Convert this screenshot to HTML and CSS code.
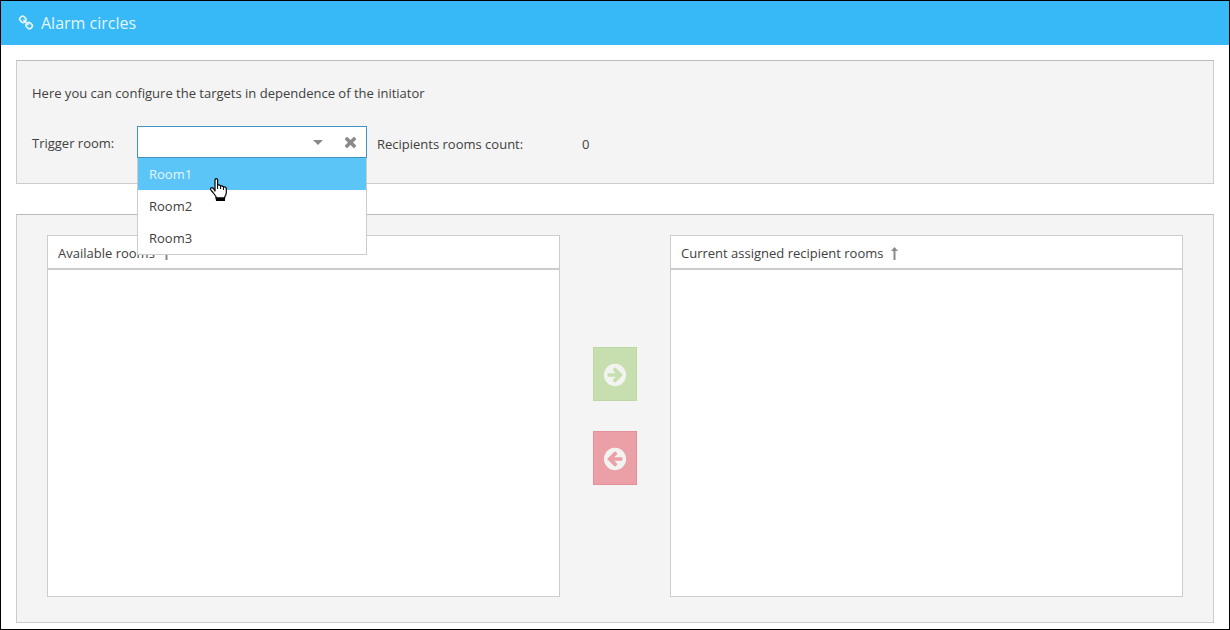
FILE: index.html
```html
<!DOCTYPE html>
<html lang="en">
<head>
<meta charset="utf-8">
<title>Alarm circles</title>
<link rel="stylesheet" href="styles.css">
</head>
<body>
<div class="window">
  <header class="titlebar">
    <svg class="titlebar-icon" viewBox="0 0 1792 1792" aria-hidden="true"><path d="M1520 1216q0-40-28-68l-208-208q-28-28-68-28-42 0-72 32 3 3 19 18.500t21.500 21.500 15 19 13 25.500 3.500 27.500q0 40-28 68t-68 28q-15 0-27.500-3.500t-25.500-13-19-15-21.500-21.500-18.500-19q-33 31-33 73 0 40 28 68l206 207q27 27 68 27 40 0 68-26l147-146q28-28 28-67zm-703-705q0-40-28-68l-206-207q-28-28-68-28-39 0-68 27l-147 146q-28 28-28 67 0 40 28 68l208 208q27 27 68 27 42 0 72-31-3-3-19-18.500t-21.500-21.500-15-19-13-25.500-3.500-27.500q0-40 28-68t68-28q15 0 27.500 3.500t25.500 13 19 15 21.500 21.500 18.500 19q33-31 33-73zm895 705q0 120-85 203l-147 146q-83 83-203 83-121 0-204-85l-206-207q-83-83-83-203 0-123 88-209l-88-88q-86 88-208 88-120 0-204-84l-208-208q-84-84-84-204t85-203l147-146q83-83 203-83 121 0 204 85l206 207q83 83 83 203 0 123-88 209l88 88q86-88 208-88 120 0 204 84l208 208q84 84 84 204z"/></svg>
    <h1 class="titlebar-text">Alarm circles</h1>
  </header>
  <main class="content">
    <section class="panel panel-settings">
      <p class="intro">Here you can configure the targets in dependence of the initiator</p>
      <div class="form-row">
        <label class="field-label" for="trigger-room">Trigger room:</label>
        <div class="combo">
          <div class="combo-box">
            <input class="combo-input" id="trigger-room" type="text" role="combobox" aria-expanded="true" aria-controls="room-list" autocomplete="off">
            <button class="combo-button" type="button" aria-label="Open list">
              <svg class="caret-icon" viewBox="0 0 10 5" aria-hidden="true"><path d="M0 0h10L5 5z"/></svg>
            </button>
            <button class="combo-button" type="button" aria-label="Clear">
              <svg class="clear-icon" viewBox="0 64 1792 1792" aria-hidden="true"><path d="M1490 1322q0 40-28 68l-136 136q-28 28-68 28t-68-28l-294-294-294 294q-28 28-68 28t-68-28l-136-136q-28-28-28-68t28-68l294-294-294-294q-28-28-28-68t28-68l136-136q28-28 68-28t68 28l294 294 294-294q28-28 68-28t68 28l136 136q28 28 28 68t-28 68l-294 294 294 294q28 28 28 68z"/></svg>
            </button>
          </div>
          <ul class="combo-list" id="room-list" role="listbox" aria-label="Rooms">
            <li class="combo-option is-active" role="option" aria-selected="true">Room1
              <svg class="pointer" viewBox="0 0 17 23" aria-hidden="true">
                <path fill="#fff" stroke="#000" stroke-width="1.200" stroke-linejoin="round" d="M5 13V2q0-1.400 1.300-1.400T7.600 2v5q2.600-.5 3 1 2.400-.5 2.800 1 2.900-.3 2.900 1.800v4q0 2-1.600 4V20H6v-1.500Q4.500 16.500 3 14.500L.8 11.800q-.7-1.500.6-2.100 1-.3 2 .8z"/>
                <path fill="none" stroke="#000" d="M7.600 7v4M10.600 8v3M13.400 9v3"/>
                <path d="M5.500 19.500h9.500V23h-9z"/>
              </svg>
            </li>
            <li class="combo-option" role="option" aria-selected="false">Room2</li>
            <li class="combo-option" role="option" aria-selected="false">Room3</li>
          </ul>
        </div>
        <span class="count-label">Recipients rooms count:</span>
        <output class="count-value">0</output>
      </div>
    </section>
    <section class="panel panel-rooms">
      <div class="room-list">
        <h2 class="room-list-head">Available rooms <svg class="sort-icon" viewBox="0 0 7 13" aria-hidden="true"><path d="M3.500 0L7 4H4.500v9h-2V4H0z"/></svg></h2>
      </div>
      <div class="transfer">
        <button class="transfer-button transfer-add" type="button" aria-label="Assign room" disabled>
          <svg class="transfer-icon" viewBox="0 0 1792 1792" aria-hidden="true"><path d="M1413 896q0-27-18-45l-91-91-362-362q-18-18-45-18t-45 18l-91 91q-18 18-18 45t18 45l189 189h-502q-26 0-45 19t-19 45v128q0 26 19 45t45 19h502l-189 189q-19 19-19 45t19 45l91 91q18 18 45 18t45-18l362-362 91-91q18-18 18-45zm251 0q0 209-103 385.500t-279.500 279.500-385.500 103-385.500-103-279.500-279.500-103-385.500 103-385.500 279.500-279.500 385.500-103 385.500 103 279.500 279.500 103 385.500z"/></svg>
        </button>
        <button class="transfer-button transfer-remove" type="button" aria-label="Remove room" disabled>
          <svg class="transfer-icon" viewBox="0 0 1792 1792" aria-hidden="true"><g transform="matrix(-1 0 0 1 1792 0)"><path d="M1413 896q0-27-18-45l-91-91-362-362q-18-18-45-18t-45 18l-91 91q-18 18-18 45t18 45l189 189h-502q-26 0-45 19t-19 45v128q0 26 19 45t45 19h502l-189 189q-19 19-19 45t19 45l91 91q18 18 45 18t45-18l362-362 91-91q18-18 18-45zm251 0q0 209-103 385.500t-279.500 279.500-385.500 103-385.500-103-279.500-279.500-103-385.500 103-385.500 279.500-279.500 385.500-103 385.500 103 279.500 279.500 103 385.500z"/></g></svg>
        </button>
      </div>
      <div class="room-list">
        <h2 class="room-list-head">Current assigned recipient rooms <svg class="sort-icon" viewBox="0 0 7 13" aria-hidden="true"><path d="M3.500 0L7 4H4.500v9h-2V4H0z"/></svg></h2>
      </div>
    </section>
  </main>
</div>
</body>
</html>
```

FILE: styles.css
```css
* {
  box-sizing: border-box;
}

body {
  margin: 0;
  font-family: "Open Sans", sans-serif;
  font-size: 13px;
  line-height: 20px;
  color: #404040;
  background: #fff;
}

.window {
  display: flex;
  flex-direction: column;
  min-height: 100vh;
  border: 1px solid #000;
}

.titlebar {
  display: flex;
  align-items: center;
  gap: 7px;
  height: 44px;
  padding: 0 17px;
  color: #e4f6ff;
  background: #36b9f6;
}

.titlebar-icon {
  width: 16px;
  height: 16px;
  fill: currentColor;
}

.titlebar-text {
  margin: 0;
  font-size: 16px;
  font-weight: 400;
}

.content {
  display: flex;
  flex: 1;
  flex-direction: column;
  gap: 30px;
  padding: 15px 15px 6px;
}

.panel {
  border: 1px solid #ccc;
  border-top-color: #bbb;
  background: #f4f4f4;
}

.panel-settings {
  padding: 22px 15px 25px;
}

.intro {
  margin: 0 0 23px;
}

.form-row {
  display: flex;
  align-items: center;
}

.field-label {
  width: 105px;
  padding-top: 2px;
}

.combo {
  position: relative;
  width: 230px;
  margin-right: 10px;
}

.combo-box {
  display: flex;
  height: 32px;
  border: 1px solid #3f92bd;
  background: #fff;
}

.combo-input {
  flex: 1;
  min-width: 0;
  padding: 0 11px;
  border: 0;
  outline: 0;
  font: inherit;
  color: inherit;
  background: transparent;
}

.combo-button {
  display: flex;
  align-items: center;
  justify-content: center;
  width: 32px;
  padding: 0;
  border: 0;
  background: transparent;
  fill: #8a8a8a;
}

.caret-icon {
  width: 10px;
  height: 5px;
}

.clear-icon {
  width: 17px;
  height: 17px;
}

.combo-list {
  position: absolute;
  z-index: 1;
  top: 100%;
  left: 0;
  width: 100%;
  margin: 0;
  padding: 0;
  border: 1px solid #ccc;
  border-top: 0;
  list-style: none;
  background: #fff;
}

.combo-option {
  position: relative;
  padding: 6px 11px;
}

.combo-option.is-active {
  color: #e4f6ff;
  background: #5bc5f8;
}

.pointer {
  position: absolute;
  z-index: 2;
  top: 20px;
  left: 72px;
  width: 17px;
  height: 23px;
}

.count-label {
  width: 205px;
  padding-top: 3px;
}

.count-value {
  padding-top: 3px;
}

.panel-rooms {
  display: grid;
  flex: 1;
  grid-template-columns: 1fr 110px 1fr;
  padding: 20px 30px 25px;
}

.room-list {
  border: 1px solid #ccc;
  background: #fff;
}

.room-list-head {
  display: flex;
  align-items: center;
  gap: 8px;
  height: 34px;
  margin: 0;
  padding: 2px 10px 0;
  border-bottom: 2px solid #ccc;
  font-size: 13px;
  font-weight: 400;
}

.sort-icon {
  width: 7px;
  height: 13px;
  fill: #8a8a8a;
}

.transfer {
  display: flex;
  flex-direction: column;
  align-items: center;
  justify-content: center;
  gap: 30px;
}

.transfer-button {
  display: flex;
  align-items: center;
  justify-content: center;
  width: 44px;
  height: 54px;
  padding: 2px 0 0;
  border: 1px solid;
  fill: #f3f3f1;
}

.transfer-add {
  border-color: #bdd8a2;
  background: #c7dfae;
}

.transfer-remove {
  border-color: #e2919a;
  background: #eb9fa7;
}

.transfer-icon {
  width: 26px;
  height: 26px;
}
```
